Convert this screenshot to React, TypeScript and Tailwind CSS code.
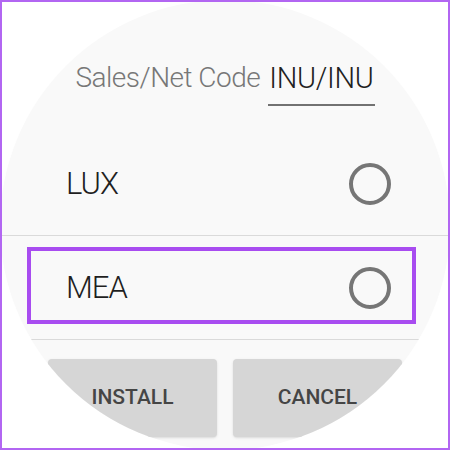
import React from "react";

function Radio() {
  return <div className="w-[42px] h-[42px] rounded-full border-[4px] border-[#767676]" />;
}

function OptionRow({ label, highlighted }: { label: string; highlighted?: boolean }) {
  return (
    <div className="relative h-[103px] flex items-center justify-between pl-[66px] pr-[59px]">
      <span className="text-[31px] tracking-[-1px] font-light text-[#1f1f1f] leading-none">{label}</span>
      <Radio />
      {highlighted && (
        <div className="absolute left-[27px] right-[34px] top-[11px] h-[77px] border-[4px] border-[#a84cf0] pointer-events-none" />
      )}
    </div>
  );
}

export default function App() {
  return (
    <div
      className="relative w-[450px] h-[450px] bg-white overflow-hidden"
      style={{ fontFamily: "Roboto, 'Noto Sans', sans-serif" }}
    >
      <div className="w-[450px] h-[450px] rounded-full bg-[#f9f9f9] overflow-hidden flex flex-col">
        <div className="pt-[60px] flex justify-center items-end gap-[8px]">
          <span className="text-[28px] tracking-[-0.5px] leading-[36px] font-light text-[#777777] pb-[10px]">
            Sales/Net Code
          </span>
          <span className="text-[29px] tracking-[-0.3px] leading-[36px] font-light text-[#212121] px-px pb-[8px] border-b-2 border-[#727272]">
            INU/INU
          </span>
        </div>
        <div className="h-[26px]" />
        <OptionRow label="LUX" />
        <div className="h-px bg-[#dadada]" />
        <OptionRow label="MEA" highlighted />
        <div className="h-px bg-[#dadada]" />
        <div className="mt-[19px] px-[48px] flex gap-[16px]">
          <button className="flex-1 h-[78px] rounded-[4px] bg-[#d6d6d6] shadow-sm text-[21px] font-medium text-[#454545]">
            INSTALL
          </button>
          <button className="flex-1 h-[78px] rounded-[4px] bg-[#d6d6d6] shadow-sm text-[21px] font-medium text-[#454545]">
            CANCEL
          </button>
        </div>
      </div>
      <div className="absolute inset-0 border-2 border-[#b266f2] pointer-events-none" />
    </div>
  );
}
